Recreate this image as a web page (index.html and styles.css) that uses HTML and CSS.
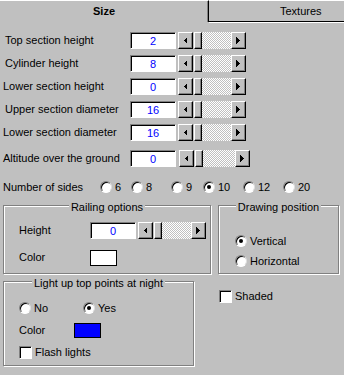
FILE: index.html
```html
<!DOCTYPE html>
<html lang="en">
<head>
    <meta charset="UTF-8">
    <meta name="viewport" content="width=device-width, initial-scale=1.0">
    <title>Tower properties</title>
    <link rel="stylesheet" href="styles.css">
</head>
<body>

    <div class="tabs">
        <div class="tab tab-active">Size</div>
        <div class="tab tab-other">Textures</div>
    </div>

    <div class="panel">
        <div class="field">
            <span class="field-label">Top section height</span>
            <span class="edit">2</span>
            <div class="scroll">
                <span class="btn"><svg width="4" height="7"><polygon points="4,0 4,7 0.5,3.5"/></svg></span>
                <span class="thumb"></span>
                <span class="track"></span>
                <span class="btn"><svg width="4" height="7"><polygon points="0,0 0,7 3.5,3.5"/></svg></span>
            </div>
        </div>
        <div class="field">
            <span class="field-label">Cylinder height</span>
            <span class="edit">8</span>
            <div class="scroll">
                <span class="btn"><svg width="4" height="7"><polygon points="4,0 4,7 0.5,3.5"/></svg></span>
                <span class="thumb"></span>
                <span class="track"></span>
                <span class="btn"><svg width="4" height="7"><polygon points="0,0 0,7 3.5,3.5"/></svg></span>
            </div>
        </div>
        <div class="field">
            <span class="field-label field-label-left">Lower section height</span>
            <span class="edit">0</span>
            <div class="scroll">
                <span class="btn"><svg width="4" height="7"><polygon points="4,0 4,7 0.5,3.5"/></svg></span>
                <span class="thumb"></span>
                <span class="track"></span>
                <span class="btn"><svg width="4" height="7"><polygon points="0,0 0,7 3.5,3.5"/></svg></span>
            </div>
        </div>
        <div class="field">
            <span class="field-label">Upper section diameter</span>
            <span class="edit">16</span>
            <div class="scroll">
                <span class="btn"><svg width="4" height="7"><polygon points="4,0 4,7 0.5,3.5"/></svg></span>
                <span class="thumb"></span>
                <span class="track"></span>
                <span class="btn"><svg width="4" height="7"><polygon points="0,0 0,7 3.5,3.5"/></svg></span>
            </div>
        </div>
        <div class="field">
            <span class="field-label field-label-left">Lower section diameter</span>
            <span class="edit">16</span>
            <div class="scroll">
                <span class="btn"><svg width="4" height="7"><polygon points="4,0 4,7 0.5,3.5"/></svg></span>
                <span class="thumb"></span>
                <span class="track"></span>
                <span class="btn"><svg width="4" height="7"><polygon points="0,0 0,7 3.5,3.5"/></svg></span>
            </div>
        </div>
        <div class="field field-altitude">
            <span class="field-label field-label-left">Altitude over the ground</span>
            <span class="edit">0</span>
            <div class="scroll scroll-wide">
                <span class="btn"><svg width="4" height="7"><polygon points="4,0 4,7 0.5,3.5"/></svg></span>
                <span class="thumb"></span>
                <span class="track"></span>
                <span class="btn"><svg width="4" height="7"><polygon points="0,0 0,7 3.5,3.5"/></svg></span>
            </div>
        </div>

        <!-- Number of sides -->
        <div class="sides">
            <span class="sides-label">Number of sides</span>
            <label class="option"><span class="radio"></span>6</label>
            <label class="option"><span class="radio"></span>8</label>
            <label class="option"><span class="radio"></span>9</label>
            <label class="option"><span class="radio radio-on"></span>10</label>
            <label class="option"><span class="radio"></span>12</label>
            <label class="option"><span class="radio"></span>20</label>
        </div>

        <div class="groups">
            <div class="group railing">
                <div class="group-title">Railing options</div>
                <div class="group-row group-row-first">
                    <span class="railing-label">Height</span>
                    <span class="edit">0</span>
                    <div class="scroll">
                        <span class="btn"><svg width="4" height="7"><polygon points="4,0 4,7 0.5,3.5"/></svg></span>
                        <span class="thumb"></span>
                        <span class="track"></span>
                        <span class="btn"><svg width="4" height="7"><polygon points="0,0 0,7 3.5,3.5"/></svg></span>
                    </div>
                </div>
                <div class="group-row group-row-gap">
                    <span class="railing-label">Color</span>
                    <span class="swatch swatch-white"></span>
                </div>
            </div>

            <div class="group drawing">
                <div class="group-title">Drawing position</div>
                <label class="radio-row radio-row-first"><span class="radio radio-on"></span>Vertical</label>
                <label class="radio-row"><span class="radio"></span>Horizontal</label>
            </div>
        </div>

        <div class="bottom">
            <div class="group lights">
                <div class="group-title">Light up top points at night</div>
                <div class="light-row light-row-first">
                    <label class="light-option"><span class="radio"></span>No</label>
                    <label class="light-option"><span class="radio radio-on"></span>Yes</label>
                </div>
                <div class="light-row">
                    <span class="light-label">Color</span>
                    <span class="swatch swatch-blue"></span>
                </div>
                <label class="light-row check-row"><span class="check"></span>Flash lights</label>
            </div>

            <label class="check-row shaded"><span class="check"></span>Shaded</label>
        </div>
    </div>

</body>
</html>
```

FILE: styles.css
```css
* {
    box-sizing: border-box;
}

body {
    margin: 0;
    width: 344px;
    height: 375px;
    overflow: hidden;
    background-color: #c0c0c0;
    font-family: "Liberation Sans", Arial, sans-serif;
    font-size: 11px;
    line-height: 13px;
    color: #000;
}

label {
    cursor: default;
}

/* tabs */
.tabs {
    display: flex;
    height: 22px;
}

.tab {
    border-top: 1px solid #fff;
    height: 22px;
}

.tab-active {
    flex: 0 0 209px;
    line-height: 21px;
    font-weight: bold;
    text-align: center;
    border-right: 1px solid #000;
    box-shadow: inset -1px 0 #808080;
}

.tab-other {
    flex: 1;
    padding-left: 71px;
    line-height: 20px;
    border-bottom: 1px solid #000;
    box-shadow: 0 1px #fff;
}

/* number fields */
.field {
    display: flex;
    align-items: center;
    height: 23px;
    padding-left: 5px;
}

.field:first-child {
    margin-top: 7px;
}

.field-altitude {
    margin-top: 3px;
}

.field-label {
    width: 125px;
}

.field-label-left {
    margin-left: -2px;
    width: 127px;
}

.edit {
    width: 46px;
    height: 17px;
    border: 1px solid;
    border-color: #808080 #fff #fff #808080;
    box-shadow: inset 1px 1px #000;
    background-color: #fff;
    color: #00f;
    text-align: center;
    line-height: 15px;
    padding-top: 1px;
}

.scroll {
    display: flex;
    width: 68px;
    height: 17px;
    margin-left: 2px;
}

.scroll-wide {
    width: 71px;
    margin-left: 3px;
}

.btn,
.thumb {
    height: 17px;
    border: 1px solid;
    border-color: #fff #000 #000 #fff;
    box-shadow: inset -1px -1px #808080;
    background-color: #c0c0c0;
}

.btn {
    width: 15px;
    display: flex;
    align-items: center;
    justify-content: center;
    padding-right: 1px;
}

.btn svg {
    shape-rendering: crispEdges;
    fill: #000;
}

.thumb {
    width: 8px;
    margin-left: 1px;
}

.track {
    flex: 1;
    background-image: repeating-conic-gradient(#fff 0 25%, #c0c0c0 0 50%);
    background-size: 2px 2px;
}

/* radios and checks */
.radio {
    position: relative;
    flex: 0 0 auto;
    width: 12px;
    height: 12px;
    border-radius: 50%;
    border: 1px solid;
    border-color: #808080 #dfdfdf #fff #808080;
    box-shadow: inset 1px 1px #000;
    background-color: #fff;
}

.radio-on::after {
    content: "";
    position: absolute;
    left: 3px;
    top: 3px;
    width: 4px;
    height: 4px;
    border-radius: 50%;
    background-color: #000;
}

.check {
    flex: 0 0 auto;
    width: 13px;
    height: 13px;
    border: 1px solid;
    border-color: #808080 #fff #fff #808080;
    box-shadow: inset 1px 1px #000;
    background-color: #fff;
}

.sides {
    display: flex;
    align-items: center;
    height: 20px;
    margin-top: 7px;
    padding-left: 3px;
}

.sides-label {
    width: 97px;
}

.option {
    display: flex;
    align-items: center;
    gap: 3px;
}

.option:nth-child(2) { width: 31px; }
.option:nth-child(3) { width: 40px; }
.option:nth-child(4) { width: 32px; }
.option:nth-child(5) { width: 40px; }
.option:nth-child(6) { width: 40px; }

/* group boxes */
.groups {
    display: flex;
    margin-top: 8px;
    padding-left: 3px;
}

.group {
    border: 1px solid #808080;
    box-shadow: inset 1px 1px #fff, 1px 1px #fff;
}

.group-title {
    display: table;
    margin: -5px auto 0;
    padding: 0 2px;
    background-color: #c0c0c0;
}

.railing {
    width: 208px;
    height: 69px;
}

.group-row {
    display: flex;
    align-items: center;
    height: 23px;
    padding-left: 15px;
}

.group-row-first {
    margin-top: 5px;
}

.group-row-gap {
    margin-top: 4px;
}

.railing-label {
    width: 71px;
}

.swatch {
    width: 27px;
    border: 1px solid #000;
}

.swatch-white {
    height: 16px;
    background-color: #fff;
}

.swatch-blue {
    height: 15px;
    background-color: #00f;
}

.drawing {
    width: 121px;
    height: 69px;
    margin-left: 7px;
}

.radio-row {
    display: flex;
    align-items: center;
    gap: 3px;
    height: 20px;
    padding-left: 16px;
}

.radio-row-first {
    margin-top: 17px;
}

.bottom {
    display: flex;
    align-items: flex-start;
    margin-top: 7px;
    padding-left: 3px;
}

.lights {
    width: 191px;
    height: 85px;
}

.light-row {
    display: flex;
    align-items: center;
    height: 22px;
    padding-left: 15px;
}

.light-row-first {
    margin-top: 7px;
}

.light-option {
    display: flex;
    align-items: center;
    gap: 3px;
    width: 64px;
}

.light-label {
    width: 55px;
}

.check-row {
    display: flex;
    align-items: center;
    gap: 3px;
}

.shaded {
    margin-left: 25px;
    margin-top: 9px;
}
```
